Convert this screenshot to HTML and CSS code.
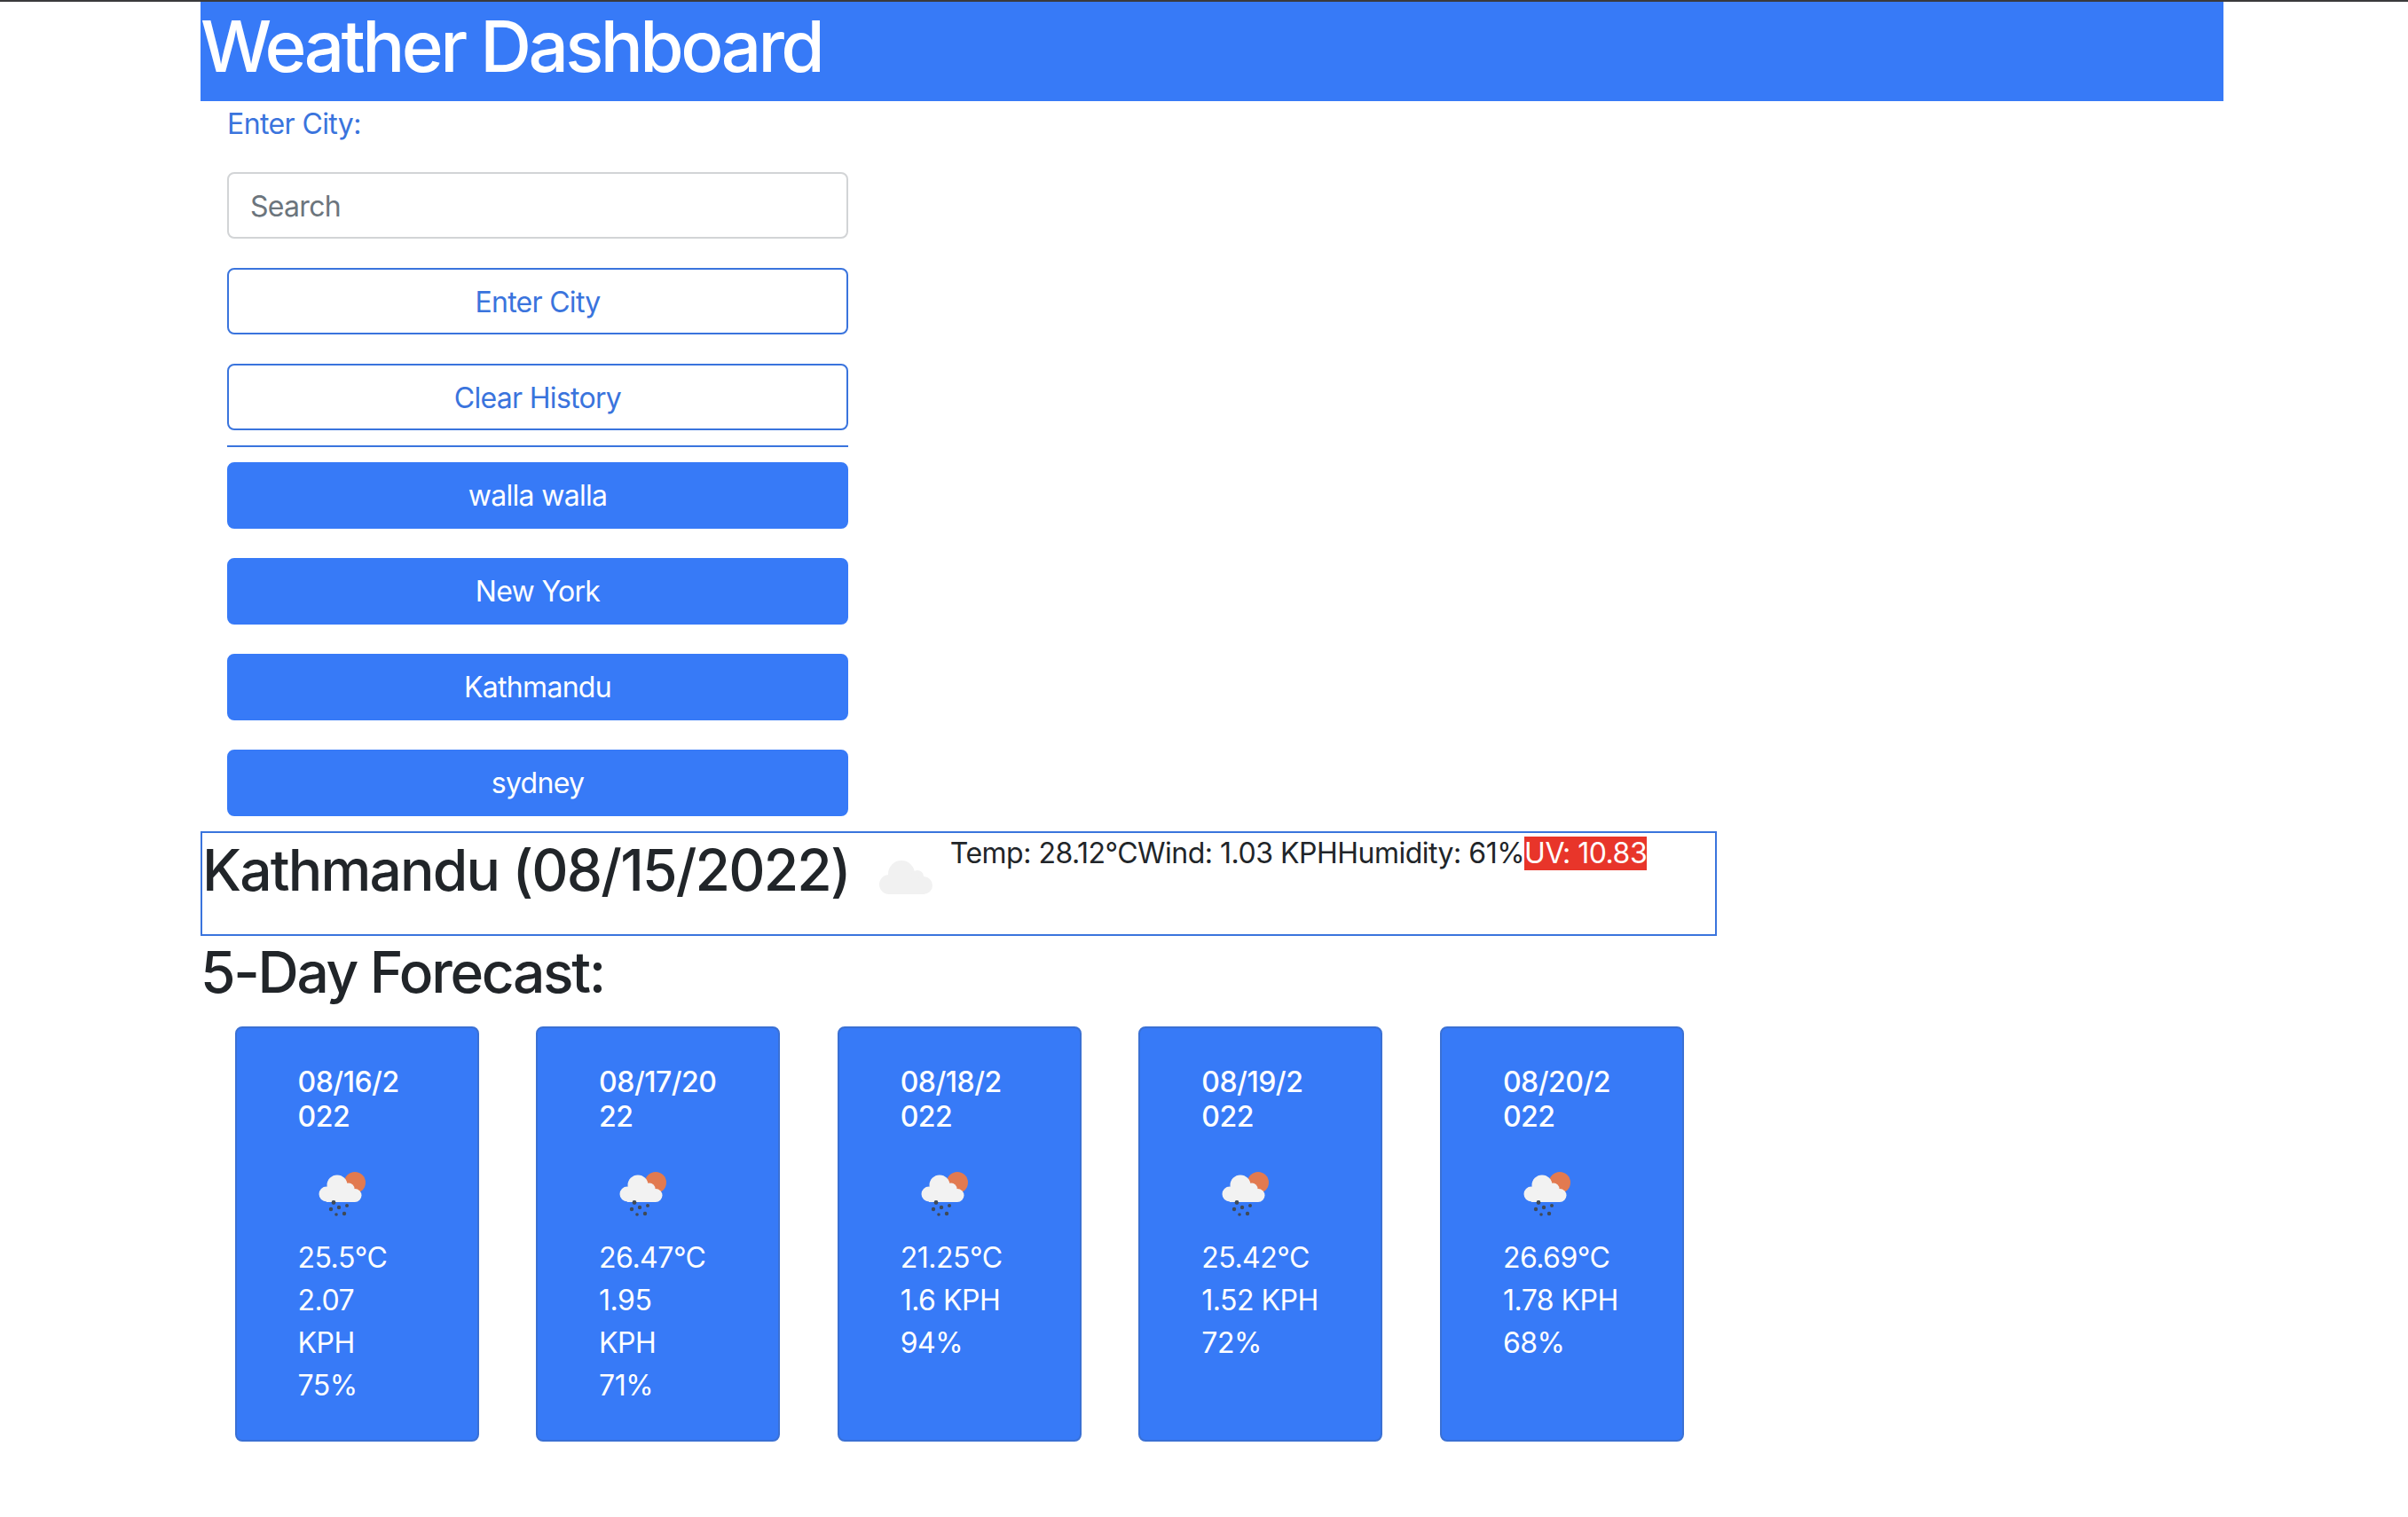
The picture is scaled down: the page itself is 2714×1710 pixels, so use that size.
FILE: index.html
```html
<!DOCTYPE html>
<html lang="en">
<head>
    <meta charset="UTF-8">
    <meta name="viewport" content="width=device-width, initial-scale=1.0">
    <title>Weather Dashboard</title>
    <link rel="stylesheet" href="styles.css">
</head>
<body>
    <svg class="sprites" width="0" height="0">
        <symbol id="rainIcon" viewBox="0 0 100 100">
            <circle cx="63" cy="39" r="12" fill="#e27a50"/>
            <g fill="#f2f2f2">
                <circle cx="43" cy="42" r="11.5"/>
                <circle cx="56" cy="46" r="6.5"/>
                <circle cx="31" cy="52" r="8.5"/>
                <circle cx="63" cy="53.5" r="7.5"/>
                <rect x="31" y="48" width="32" height="13"/>
            </g>
            <g fill="#3f4a58">
                <circle cx="39" cy="61.5" r="2.4"/>
                <circle cx="36" cy="69" r="2.2"/>
                <circle cx="45" cy="67" r="2.2"/>
                <circle cx="54" cy="65" r="2"/>
                <circle cx="42" cy="75" r="1.8"/>
                <circle cx="51" cy="74" r="2.2"/>
            </g>
        </symbol>
    </svg>

    <div class="container">
        <h1 class="title">Weather Dashboard</h1>

        <div class="sidebar">
            <label class="city-label" for="cityInput">Enter City:</label>
            <input class="city-input" id="cityInput" type="text" placeholder="Search">
            <button class="btn btn-outline">Enter City</button>
            <button class="btn btn-outline">Clear History</button>
            <hr class="divider">
            <button class="btn btn-solid">walla walla</button>
            <button class="btn btn-solid">New York</button>
            <button class="btn btn-solid">Kathmandu</button>
            <button class="btn btn-solid">sydney</button>
        </div>

        <div class="today">
            <h2 class="today-city">Kathmandu (08/15/2022)</h2>
            <svg class="today-icon" viewBox="0 0 100 100">
                <g fill="#f1f1f1">
                    <circle cx="45" cy="46" r="15"/>
                    <circle cx="63" cy="49" r="7"/>
                    <circle cx="31" cy="58" r="11"/>
                    <circle cx="70" cy="59" r="10"/>
                    <rect x="31" y="52" width="39" height="17"/>
                </g>
            </svg>
            <div class="today-stats">
                <span>Temp: 28.12°C</span><span>Wind: 1.03 KPH</span><span>Humidity: 61%</span><span class="uv">UV: 10.83</span>
            </div>
        </div>

        <h2 class="forecast-title">5-Day Forecast:</h2>

        <div class="forecast">
            <div class="card">
                <h5 class="card-date">08/16/2<br>022</h5>
                <svg class="card-icon"><use href="#rainIcon"/></svg>
                <p>25.5°C</p>
                <p>2.07<br>KPH</p>
                <p>75%</p>
            </div>
            <div class="card">
                <h5 class="card-date">08/17/20<br>22</h5>
                <svg class="card-icon"><use href="#rainIcon"/></svg>
                <p>26.47°C</p>
                <p>1.95<br>KPH</p>
                <p>71%</p>
            </div>
            <div class="card">
                <h5 class="card-date">08/18/2<br>022</h5>
                <svg class="card-icon"><use href="#rainIcon"/></svg>
                <p>21.25°C</p>
                <p>1.6 KPH</p>
                <p>94%</p>
            </div>
            <div class="card">
                <h5 class="card-date">08/19/2<br>022</h5>
                <svg class="card-icon"><use href="#rainIcon"/></svg>
                <p>25.42°C</p>
                <p>1.52 KPH</p>
                <p>72%</p>
            </div>
            <div class="card">
                <h5 class="card-date">08/20/2<br>022</h5>
                <svg class="card-icon"><use href="#rainIcon"/></svg>
                <p>26.69°C</p>
                <p>1.78 KPH</p>
                <p>68%</p>
            </div>
        </div>
    </div>
</body>
</html>
```

FILE: styles.css
```css
body {
    font-family: Inter, "Liberation Sans", sans-serif;
    font-size: 32px;
    line-height: 48px;
    color: #212529;
    background-color: #fff;
    border-top: 2px solid #3a3a3c;
    margin: 0;
    padding: 0;
}

.sprites {
    display: block;
}

.container {
    width: 2280px;
    margin-left: 226px;
}

.title {
    height: 112px;
    margin: 0;
    background: #377af7;
    color: #fff;
    font-size: 80px;
    font-weight: 500;
    line-height: 100px;
    letter-spacing: -3.6px;
}

.sidebar {
    display: flex;
    flex-direction: column;
    width: 700px;
    margin-left: 30px;
    padding-top: 1px;
}

.city-label {
    color: #3a74dd;
    padding-top: 1px;
    margin-bottom: 30px;
    letter-spacing: -0.6px;
}

.city-input {
    box-sizing: border-box;
    height: 75px;
    padding: 2px 24px 0;
    font: inherit;
    letter-spacing: -0.7px;
    color: #212529;
    border: 2px solid #d2d4d6;
    border-radius: 8px;
    margin-bottom: 33px;
}

.city-input::placeholder {
    color: #6c757d;
}

.btn {
    box-sizing: border-box;
    height: 75px;
    padding: 0;
    font: inherit;
    letter-spacing: -0.7px;
    border-radius: 8px;
    margin-bottom: 33px;
    cursor: pointer;
}

.btn-outline {
    padding-top: 2px;
    background: #fff;
    color: #3a74dd;
    border: 2px solid #3a74dd;
}

.btn-solid {
    background: #377af7;
    color: #fff;
    border: 2px solid #377af7;
}

.divider {
    width: 100%;
    height: 2px;
    margin: -16px 0 17px;
    border: none;
    background: #3a74dd;
}

.today {
    box-sizing: border-box;
    display: flex;
    width: 1709px;
    height: 118px;
    margin-top: -16px;
    border: 2px solid #3a74dd;
}

.today-city {
    margin: 0;
    padding-top: 3px;
    font-size: 64px;
    font-weight: 500;
    line-height: 77px;
    letter-spacing: -1.8px;
    white-space: nowrap;
}

.today-icon {
    flex: none;
    width: 100px;
    height: 100px;
    margin-left: 13px;
}

.today-stats {
    padding-top: 4px;
    line-height: 38px;
    white-space: nowrap;
    letter-spacing: -0.5px;
}

.uv {
    display: inline-block;
    background: #e8352a;
    color: #fff;
    letter-spacing: -0.5px;
}

.forecast-title {
    margin: 2px 0 23px;
    font-size: 64px;
    font-weight: 500;
    line-height: 77px;
    letter-spacing: -2.3px;
}

.forecast {
    display: grid;
    grid-template-columns: repeat(5, 275px);
    column-gap: 64.6px;
    margin-left: 38.5px;
}

.card {
    box-sizing: border-box;
    height: 468px;
    padding: 41px 69px 0;
    background: #377af7;
    color: #fff;
    border: 2px solid #3a70d4;
    border-radius: 8px;
    white-space: nowrap;
}

.card p {
    margin: 0;
    letter-spacing: -0.5px;
}

.card-date {
    margin: 0 0 16px;
    font-size: 32px;
    font-weight: 500;
    line-height: 39px;
    letter-spacing: -0.5px;
}

.card-icon {
    display: block;
    width: 100px;
    height: 100px;
    margin-left: 1px;
}
```
